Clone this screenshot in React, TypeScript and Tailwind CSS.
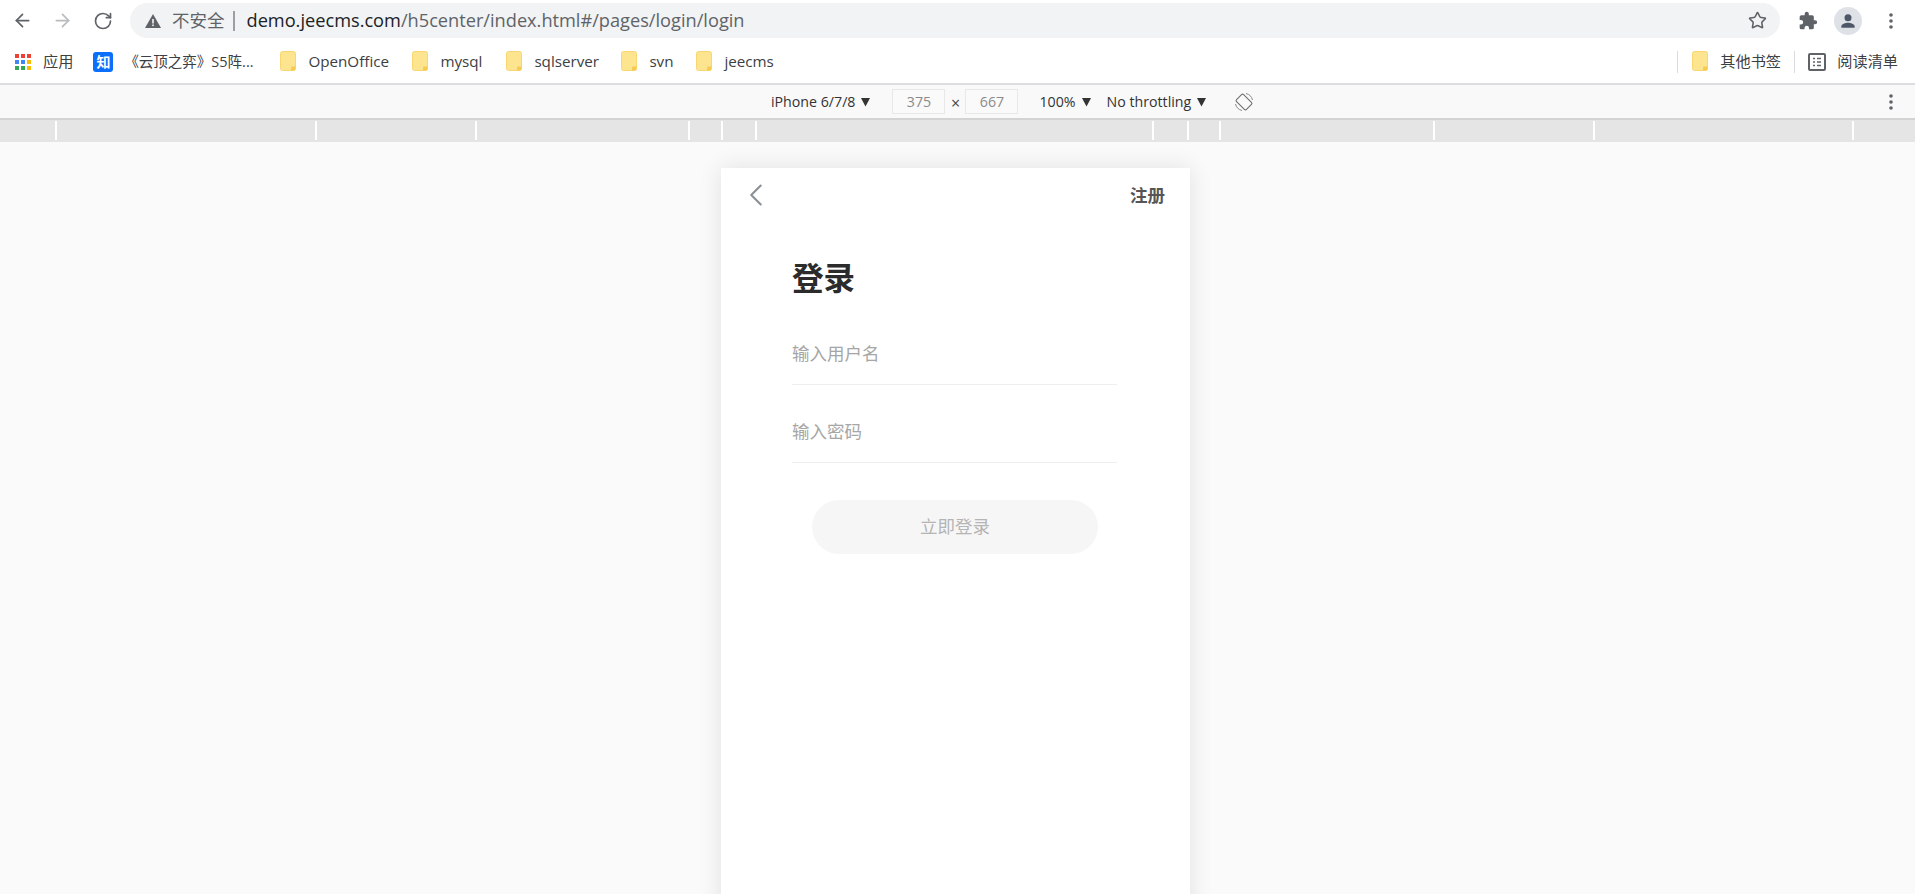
import { ArrowLeft, ArrowRight, RotateCw, Star, ChevronLeft } from 'lucide-react';

const uiFont = "font-['Open_Sans','Noto_Sans_CJK_SC',sans-serif]";

const rulerStops = [57, 317, 477, 690, 723, 757, 1154, 1189, 1221, 1435, 1595, 1854, 1915];

function Folder() {
  return (
    <svg width="16" height="20" viewBox="0 0 16 20" className="shrink-0">
      <rect x="0.500" y="0.500" width="15" height="19" rx="2" fill="#fde58f" stroke="#f9d671" />
      <path d="M11 19.500v-3a1 1 0 0 1 1-1h3.500v2a2 2 0 0 1-2 2z" fill="#f5cc52" />
    </svg>
  );
}

function Caret({ className = '' }: { className?: string }) {
  return (
    <svg width="9" height="10" viewBox="0 0 9 10" className={className}>
      <path d="M0 1h9L4.500 9.500z" fill="#333" />
    </svg>
  );
}

function Kebab() {
  return (
    <svg width="4" height="16" viewBox="0 0 4 16">
      <circle cx="2" cy="2" r="1.800" fill="#5f6368" />
      <circle cx="2" cy="8" r="1.800" fill="#5f6368" />
      <circle cx="2" cy="14" r="1.800" fill="#5f6368" />
    </svg>
  );
}

function AppsGrid() {
  const colors = ['#ea4335', '#ea4335', '#ea4335', '#4285f4', '#4285f4', '#fbbc04', '#34a853', '#34a853', '#fbbc04'];
  return (
    <div className="grid grid-cols-3 gap-[2px] w-4 shrink-0">
      {colors.map((c, i) => (
        <span key={i} className="w-1 h-1" style={{ backgroundColor: c }} />
      ))}
    </div>
  );
}

function Bookmark({ label, width }: { label: string; width: string }) {
  return (
    <div className="flex items-center gap-3 shrink-0">
      <Folder />
      <span className={`whitespace-nowrap ${width}`}>{label}</span>
    </div>
  );
}

function BrowserChrome() {
  return (
    <>
      <div className="flex items-center h-[41px] bg-white">
        <ArrowLeft className="ml-[12px] w-[21px] h-[21px] text-[#5f6368]" strokeWidth={2} />
        <ArrowRight className="ml-[19px] w-[21px] h-[21px] text-[#b9bbbe]" strokeWidth={2} />
        <RotateCw className="ml-[20px] w-[20px] h-[20px] text-[#5f6368]" strokeWidth={2} />
        <div className="ml-[17px] flex items-center w-[1650px] h-[35px] rounded-full bg-[#f1f3f4] pl-[15px] pr-[13px]">
          <svg width="16" height="14" viewBox="0 0 16 14" className="shrink-0">
            <path d="M8 0l8 14H0z" fill="#5f6368" />
            <rect x="7.200" y="5" width="1.600" height="4.500" fill="#f1f3f4" />
            <rect x="7.200" y="10.500" width="1.600" height="1.600" fill="#f1f3f4" />
          </svg>
          <span className="ml-[11px] text-[17.500px] text-[#5f6368]">不安全</span>
          <span className="ml-[8px] w-[2px] h-[20px] bg-[#9aa0a6]" />
          <span className="ml-[12px] text-[18.200px] text-[#202124]">demo.jeecms.com</span>
          <span className="text-[18.200px] text-[#5f6368]">/h5center/index.html#/pages/login/login</span>
          <Star className="ml-auto w-[19px] h-[19px] text-[#5f6368]" strokeWidth={2} />
        </div>
        <svg width="20" height="20" viewBox="0 0 24 24" className="ml-[18px] shrink-0">
          <path
            d="M20.500 11H19V7a2 2 0 0 0-2-2h-4V3.500a2.500 2.500 0 0 0-5 0V5H4a2 2 0 0 0-2 2v3.800h1.500a2.700 2.700 0 0 1 0 5.400H2V20a2 2 0 0 0 2 2h3.800v-1.500a2.700 2.700 0 0 1 5.400 0V22H17a2 2 0 0 0 2-2v-4h1.500a2.500 2.500 0 0 0 0-5z"
            fill="#5f6368"
          />
        </svg>
        <div className="ml-[16px] w-[28px] h-[28px] rounded-full bg-[#dee1e6] flex items-center justify-center shrink-0">
          <svg width="20" height="20" viewBox="0 0 24 24">
            <circle cx="12" cy="8" r="4.200" fill="#4d5767" />
            <path d="M4 20v-1.500c0-2.800 5-4.300 8-4.300s8 1.500 8 4.300V20z" fill="#4d5767" />
          </svg>
        </div>
        <div className="ml-[27px]">
          <Kebab />
        </div>
      </div>

      <div className="flex items-center h-[42px] pb-[1px] bg-white text-[15.200px] text-[#3c4043]">
        <div className="ml-[15px]">
          <AppsGrid />
        </div>
        <span className="ml-[12px]">应用</span>
        <span className="ml-[20px] w-[20px] h-[20px] rounded-[3px] bg-[#0b6ffb] text-white text-[14px] font-bold flex items-center justify-center shrink-0">
          知
        </span>
        <span className="ml-[11px] w-[134px] text-[14.500px] whitespace-nowrap">《云顶之弈》S5阵...</span>
        <div className="ml-[22px] flex items-center gap-[22px]">
          <Bookmark label="OpenOffice" width="w-[82px]" />
          <Bookmark label="mysql" width="w-[44px]" />
          <Bookmark label="sqlserver" width="w-[65px]" />
          <Bookmark label="svn" width="w-[25px]" />
          <Bookmark label="jeecms" width="w-[49px]" />
        </div>
        <span className="ml-auto w-[1px] h-[22px] bg-[#dadce0]" />
        <div className="ml-[14px]">
          <Bookmark label="其他书签" width="w-[61px]" />
        </div>
        <span className="ml-[13px] w-[1px] h-[22px] bg-[#dadce0]" />
        <svg width="18" height="18" viewBox="0 0 18 18" className="ml-[13px] shrink-0">
          <rect x="1" y="1" width="16" height="16" rx="1" fill="none" stroke="#5f6368" strokeWidth="2" />
          <path d="M5 5.500h2M9 5.500h4M5 9h2M9 9h4M5 12.500h2M9 12.500h4" stroke="#5f6368" strokeWidth="1.500" />
        </svg>
        <span className="ml-[11px] mr-[17px]">阅读清单</span>
      </div>
    </>
  );
}

function DeviceToolbar() {
  return (
    <div className="h-[37px] bg-[#f9f9fa] border-t-2 border-b-2 border-t-[#dcdce1] border-b-[#d3d3d3] flex items-center text-[14.200px] text-[#333]">
      <div className="ml-[771px] flex items-center">
        <span>iPhone 6/7/8</span>
        <Caret className="ml-[6px]" />
        <span className="ml-[22px] w-[53px] h-[25px] border border-[#e8e8e8] bg-[#fafafa] text-[#8a8a8a] flex items-center justify-center">
          375
        </span>
        <span className="w-[20px] pt-[3px] text-center text-[16px] text-[#444]">×</span>
        <span className="w-[53px] h-[25px] border border-[#e8e8e8] bg-[#fafafa] text-[#8a8a8a] flex items-center justify-center">
          667
        </span>
        <span className="ml-[21px]">100%</span>
        <Caret className="ml-[6px]" />
        <span className="ml-[16px]">No throttling</span>
        <Caret className="ml-[6px]" />
        <svg width="20" height="20" viewBox="0 0 20 20" className="ml-[28px]">
          <g transform="rotate(-45 10 10)" fill="none" stroke="#6e6e6e" strokeWidth="1.100">
            <rect x="5" y="3" width="10" height="14" rx="1.500" />
          </g>
          <path d="M12 1.500A8.700 8.700 0 0 1 18.500 8M8 18.500A8.700 8.700 0 0 1 1.500 12" fill="none" stroke="#8a8a8a" strokeWidth="1" />
        </svg>
      </div>
      <div className="ml-auto mr-[22px]">
        <Kebab />
      </div>
    </div>
  );
}

function Ruler() {
  return (
    <div className="flex h-[22px] bg-[#e5e5e5] pt-[1px] overflow-hidden">
      {rulerStops.map((stop, i) => (
        <div
          key={stop}
          className="h-[19px] border-r-2 border-white shrink-0 last:border-r-0"
          style={{ width: stop - (i === 0 ? 0 : rulerStops[i - 1]) }}
        />
      ))}
    </div>
  );
}

function LoginPage() {
  return (
    <div className="w-[469px] h-[834px] shrink-0 bg-white shadow-[0_0_22px_rgba(0,0,0,0.1)] font-['Noto_Sans_CJK_SC','Noto_Sans',sans-serif]">
      <div className="flex items-center justify-between h-[54px] px-[25px]">
        <ChevronLeft className="w-[38px] h-[38px] -ml-[9px] text-[#8a8f94]" strokeWidth={1.300} />
        <span className="text-[17.500px] font-bold text-[#555]">注册</span>
      </div>
      <div className="pl-[71px] pr-[73px]">
        <h1 className="mt-[30px] pt-[1px] h-[46px] text-[31.500px] leading-[46px] font-bold text-[#2b2b2b]">登录</h1>
        <div className="mt-[27px] h-[60px] border-b border-[#eeeeee] text-[17.500px] text-[#a6a6a6] leading-[56px]">
          输入用户名
        </div>
        <div className="mt-[18px] h-[60px] border-b border-[#eeeeee] text-[17.500px] text-[#a6a6a6] leading-[55px]">
          输入密码
        </div>
        <div className="ml-[20px] mr-[19px] mt-[37px] h-[54px] pb-[2px] rounded-full bg-[#f6f6f6] flex items-center justify-center text-[17.500px] text-[#b4b4b4]">
          立即登录
        </div>
      </div>
    </div>
  );
}

export default function App() {
  return (
    <div className={`h-[894px] w-[1915px] overflow-hidden flex flex-col bg-[#fafafa] ${uiFont}`}>
      <BrowserChrome />
      <DeviceToolbar />
      <Ruler />
      <div className="flex-1 flex justify-center pt-[26px] pr-[4px] overflow-hidden">
        <LoginPage />
      </div>
    </div>
  );
}
